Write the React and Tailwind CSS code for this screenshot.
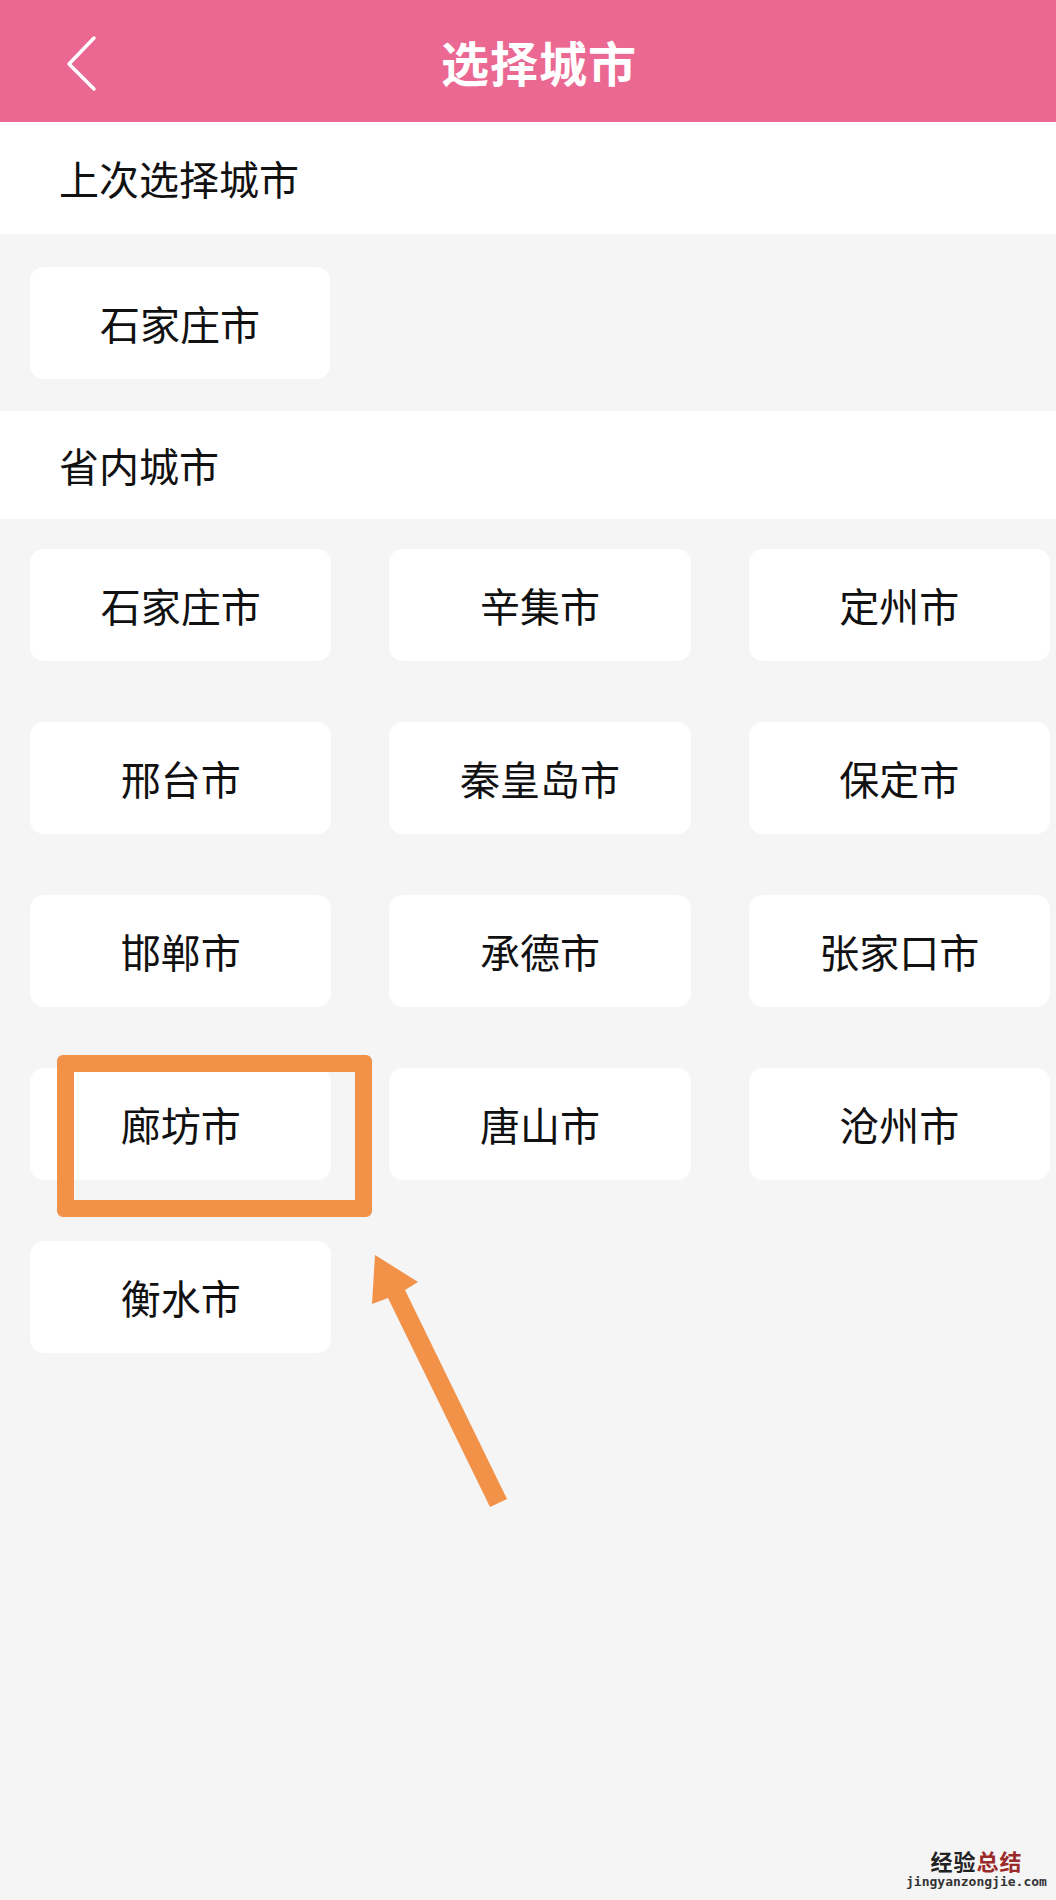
import { useState } from 'react';

const font = { fontFamily: '"Noto Sans CJK SC", "Noto Sans", sans-serif' };

const lastCities = ['石家庄市'];
const provinceCities = [
  '石家庄市', '辛集市', '定州市',
  '邢台市', '秦皇岛市', '保定市',
  '邯郸市', '承德市', '张家口市',
  '廊坊市', '唐山市', '沧州市',
  '衡水市',
];

function CityCard({ name, onClick }) {
  return (
    <button
      onClick={onClick}
      className="h-[112px] w-full rounded-[14px] bg-white text-[40px] leading-none text-[#111] flex items-center justify-center"
    >
      {name}
    </button>
  );
}

function SectionTitle({ children, className }) {
  return (
    <div className={`bg-white pl-[59px] flex items-center text-[40px] leading-none text-[#111] ${className}`}>
      {children}
    </div>
  );
}

export default function App() {
  const [selected, setSelected] = useState('石家庄市');

  return (
    <div className="relative w-[1056px] min-h-[1900px] bg-[#f5f5f5]" style={font}>
      {/* header */}
      <div className="relative h-[122px] bg-[#ea6891] flex items-center justify-center">
        <button className="absolute left-[60px] top-[30px] w-[44px] h-[64px] flex items-center justify-center">
          <svg width="40" height="60" viewBox="0 0 40 60">
            <polyline points="32,6 7,32 32,57" fill="none" stroke="#fff" strokeWidth="3.5" strokeLinecap="round" strokeLinejoin="round" />
          </svg>
        </button>
        <h1 className="pl-[22px] text-[48px] font-bold text-white leading-none tracking-[1px]">选择城市</h1>
      </div>

      <SectionTitle className="h-[112px]">上次选择城市</SectionTitle>
      <div className="pt-[33px] pb-[32px] pl-[30px]">
        <div className="w-[300px]">
          {lastCities.map((c) => (
            <CityCard key={c} name={c} onClick={() => setSelected(c)} />
          ))}
        </div>
      </div>

      <SectionTitle className="h-[108px]">省内城市</SectionTitle>
      <div className="pt-[30px] pl-[30px] pr-[6px] grid grid-cols-3 gap-x-[58px] gap-y-[61px]">
        {provinceCities.map((c, i) => (
          <CityCard key={i} name={c} onClick={() => setSelected(c)} />
        ))}
      </div>

      {/* annotation: highlight box */}
      <div className="absolute left-[57px] top-[1055px] w-[315px] h-[162px] border-[17px] border-[#f29148] rounded-[6px]" />

      {/* annotation: arrow */}
      <svg className="absolute left-0 top-0 pointer-events-none" width="1056" height="1900">
        <polygon
          points="375,1255 418,1282 405,1290 507,1499 490,1507 388,1298 372,1304"
          fill="#f29148"
        />
      </svg>

      {/* watermark */}
      <div className="absolute left-[906px] top-[1849px] flex flex-col items-center">
        <div className="text-[22px] font-bold leading-none tracking-[1px]">
          <span className="text-[#222]">经验</span>
          <span className="text-[#9b2a2a]">总结</span>
        </div>
        <div className="mt-[4px] text-[13px] font-bold leading-none text-[#333]" style={{ fontFamily: '"DejaVu Sans Mono", monospace' }}>
          jingyanzongjie.com
        </div>
      </div>
      <span className="hidden">{selected}</span>
    </div>
  );
}
